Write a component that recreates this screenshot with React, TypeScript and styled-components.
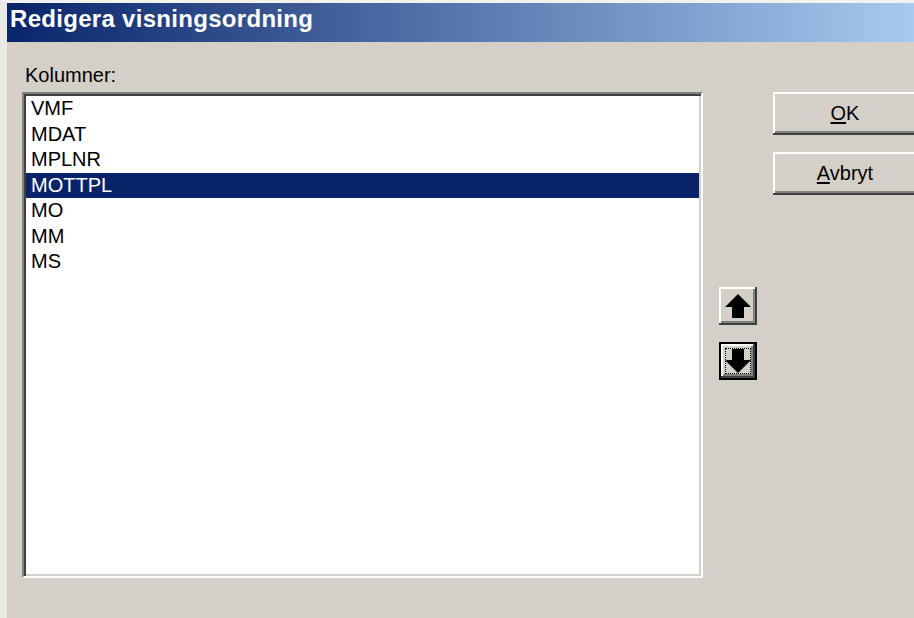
import React, { useState } from 'react';
import styled, { createGlobalStyle } from 'styled-components';

const GlobalStyle = createGlobalStyle`
  html, body {
    margin: 0;
    padding: 0;
    background: #d4d0c8;
  }
  body {
    font-family: "Liberation Sans", Arial, sans-serif;
  }
`;

const Window = styled.div`
  width: 914px;
  height: 618px;
  box-sizing: border-box;
  background: #d4d0c8;
  border-top: 3px solid #f3f2ee;
  border-left: 7px solid #ebe9e4;
  display: flex;
  flex-direction: column;
  overflow: hidden;
`;

const TitleBar = styled.div`
  height: 39px;
  flex: none;
  box-sizing: border-box;
  padding: 2px 0 0 3px;
  background: linear-gradient(to right, #0a246a 0%, #a6caf0 100%);
  color: #ffffff;
  font-family: "Liberation Sans", Arial, sans-serif;
  font-weight: bold;
  font-size: 24px;
  line-height: 28px;
  letter-spacing: 0.3px;
  white-space: nowrap;
`;

const Body = styled.div`
  flex: 1;
  min-width: 0;
  padding: 22px 0 0 15px;
  display: grid;
  grid-template-columns: 681px 38px 152px;
  grid-template-rows: auto 1fr;
  column-gap: 16px;
  row-gap: 5px;
  align-items: start;
  overflow: hidden;
`;

const Label = styled.div`
  grid-column: 1 / 2;
  margin-left: 3px;
  font-size: 20px;
  line-height: 23px;
  color: #000000;
`;

const ListBox = styled.div`
  width: 681px;
  height: 486px;
  box-sizing: border-box;
  background: #ffffff;
  border: 2px solid;
  border-color: #808080 #ffffff #ffffff #808080;
  box-shadow: inset 2px 2px #404040, inset -2px -2px #d4d0c8;
  padding: 2px;
  overflow: hidden;
`;

const Row = styled.div<{ $selected?: boolean }>`
  height: 25.5px;
  line-height: 25.5px;
  padding-left: 5px;
  font-size: 20px;
  white-space: nowrap;
  cursor: default;
  color: ${p => (p.$selected ? '#ffffff' : '#000000')};
  background: ${p => (p.$selected ? '#0a246a' : 'transparent')};
`;

const ArrowColumn = styled.div`
  padding-top: 195px;
  display: flex;
  flex-direction: column;
  gap: 17px;
`;

const ArrowButton = styled.button<{ $focused?: boolean }>`
  position: relative;
  width: 38px;
  height: 38px;
  padding: 0;
  margin: 0;
  background: #d4d0c8;
  border: ${p => (p.$focused ? '2px solid #000000' : 'none')};
  box-sizing: border-box;
  box-shadow: inset -2px -2px #404040, inset 2px 2px #ffffff, inset -4px -4px #808080;
  display: flex;
  align-items: center;
  justify-content: center;
  cursor: default;

  svg {
    display: block;
  }
`;

const FocusRing = styled.span`
  position: absolute;
  inset: 4px;
  border: 1px dotted #000000;
  pointer-events: none;
`;

const ButtonColumn = styled.div`
  display: flex;
  flex-direction: column;
  gap: 17px;
`;

// the dialog is cropped on the right, so the buttons run past the edge
const PushButton = styled.button`
  width: 152px;
  height: 43px;
  padding: 0 8px 0 0;
  margin: 0;
  border: none;
  background: #d4d0c8;
  box-shadow: inset -2px -2px #404040, inset 2px 2px #ffffff, inset -4px -4px #808080;
  font-family: "Liberation Sans", Arial, sans-serif;
  font-size: 20px;
  color: #000000;
  cursor: default;

  u {
    text-decoration-thickness: 2px;
    text-underline-offset: 2px;
  }
`;

const UpArrow = () => (
  <svg width="26" height="24" viewBox="0 0 26 24">
    <polygon points="13,0 26,13 19,13 19,24 7,24 7,13 0,13" fill="#000000" />
  </svg>
);

const DownArrow = () => (
  <svg width="26" height="24" viewBox="0 0 26 24">
    <polygon points="7,0 19,0 19,11 26,11 13,24 0,11 7,11" fill="#000000" />
  </svg>
);

const columns = ['VMF', 'MDAT', 'MPLNR', 'MOTTPL', 'MO', 'MM', 'MS'];

export default function App() {
  const [selected, setSelected] = useState(3);

  return (
    <>
      <GlobalStyle />
      <Window>
        <TitleBar>Redigera visningsordning</TitleBar>
        <Body>
          <Label>Kolumner:</Label>
          <div />
          <div />
          <ListBox>
            {columns.map((name, i) => (
              <Row key={name} $selected={i === selected} onClick={() => setSelected(i)}>
                {name}
              </Row>
            ))}
          </ListBox>
          <ArrowColumn>
            <ArrowButton>
              <UpArrow />
            </ArrowButton>
            <ArrowButton $focused>
              <DownArrow />
              <FocusRing />
            </ArrowButton>
          </ArrowColumn>
          <ButtonColumn>
            <PushButton>
              <u>O</u>K
            </PushButton>
            <PushButton>
              <u>A</u>vbryt
            </PushButton>
          </ButtonColumn>
        </Body>
      </Window>
    </>
  );
}
